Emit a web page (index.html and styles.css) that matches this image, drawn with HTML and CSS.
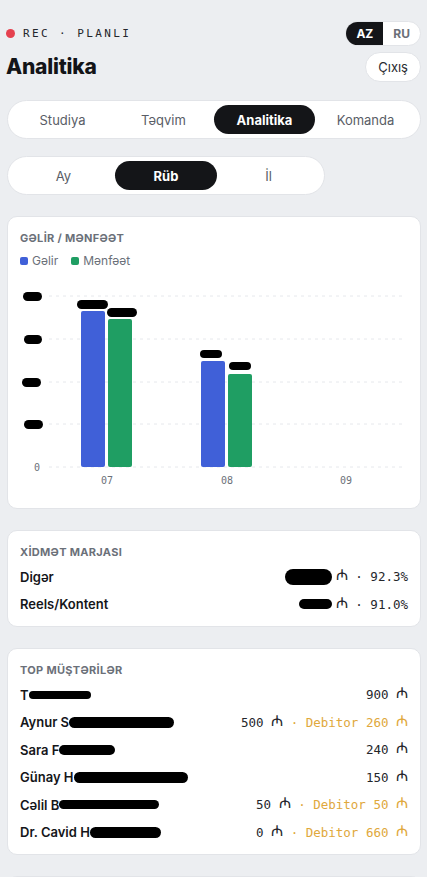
FILE: index.html
```html
<!DOCTYPE html>
<html lang="az">
<head>
  <meta charset="UTF-8" />
  <meta name="viewport" content="width=device-width, initial-scale=1.0"/>
  <title>Analitika</title>
  <link rel="stylesheet" href="styles.css">
</head>
<body>
  <header class="top">
    <div class="top-left">
      <div class="status"><span class="rec-dot"></span>REC · PLANLI</div>
      <h1>Analitika</h1>
    </div>
    <div class="top-right">
      <div class="lang">
        <button class="lang-btn active">AZ</button>
        <button class="lang-btn">RU</button>
      </div>
      <button class="logout">Çıxış</button>
    </div>
  </header>

  <nav class="seg tabs">
    <button class="seg-btn">Studiya</button>
    <button class="seg-btn">Təqvim</button>
    <button class="seg-btn active">Analitika</button>
    <button class="seg-btn">Komanda</button>
  </nav>

  <div class="seg period">
    <button class="seg-btn">Ay</button>
    <button class="seg-btn active">Rüb</button>
    <button class="seg-btn">İl</button>
  </div>

  <section class="card">
    <h2 class="card-title">Gəlir / Mənfəət</h2>
    <div class="legend">
      <span class="legend-item"><i class="sw blue"></i>Gəlir</span>
      <span class="legend-item"><i class="sw green"></i>Mənfəət</span>
    </div>
    <svg class="chart" viewBox="0 0 390 220" width="390" height="220">
      <g class="grid">
        <line x1="29" y1="20" x2="385" y2="20"/>
        <line x1="29" y1="63" x2="385" y2="63"/>
        <line x1="29" y1="106" x2="385" y2="106"/>
        <line x1="29" y1="148" x2="385" y2="148"/>
        <line x1="29" y1="191" x2="385" y2="191"/>
      </g>
      <g class="mask">
        <rect x="3" y="16" width="19" height="9" rx="4.5"/>
        <rect x="4" y="59" width="18" height="9" rx="4.5"/>
        <rect x="2" y="102" width="19" height="9" rx="4.5"/>
        <rect x="4" y="144" width="19" height="9" rx="4.5"/>
      </g>
      <text class="axis" x="20" y="195" text-anchor="end">0</text>
      <rect class="bar-blue" x="61" y="35" width="24" height="156" rx="2"/>
      <rect class="bar-green" x="88" y="43" width="24" height="148" rx="2"/>
      <rect class="bar-blue" x="181" y="85" width="24" height="106" rx="2"/>
      <rect class="bar-green" x="208" y="98" width="24" height="93" rx="2"/>
      <g class="mask">
        <rect x="57" y="24" width="31" height="9" rx="4.5"/>
        <rect x="87" y="32" width="30" height="9" rx="4.5"/>
        <rect x="180" y="74" width="22" height="8" rx="4"/>
        <rect x="209" y="86" width="22" height="8" rx="4"/>
      </g>
      <text class="axis" x="87" y="208" text-anchor="middle">07</text>
      <text class="axis" x="207" y="208" text-anchor="middle">08</text>
      <text class="axis" x="326" y="208" text-anchor="middle">09</text>
    </svg>
  </section>

  <section class="card">
    <h2 class="card-title">Xidmət marjası</h2>
    <div class="row">
      <span class="name">Digər</span>
      <span class="val"><i class="blob m1"></i><span class="cur">₼</span> · 92.3%</span>
    </div>
    <div class="row">
      <span class="name">Reels/Kontent</span>
      <span class="val"><i class="blob m2"></i><span class="cur">₼</span> · 91.0%</span>
    </div>
  </section>

  <section class="card">
    <h2 class="card-title">Top müştərilər</h2>
    <div class="row">
      <span class="name">T<i class="blob c1"></i></span>
      <span class="val">900 <span class="cur">₼</span></span>
    </div>
    <div class="row">
      <span class="name">Aynur S<i class="blob c2"></i></span>
      <span class="val">500 <span class="cur">₼</span><span class="debt"> · Debitor 260 <span class="cur">₼</span></span></span>
    </div>
    <div class="row">
      <span class="name">Sara F<i class="blob c3"></i></span>
      <span class="val">240 <span class="cur">₼</span></span>
    </div>
    <div class="row">
      <span class="name">Günay H<i class="blob c4"></i></span>
      <span class="val">150 <span class="cur">₼</span></span>
    </div>
    <div class="row">
      <span class="name">Cəlil B<i class="blob c5"></i></span>
      <span class="val">50 <span class="cur">₼</span><span class="debt"> · Debitor 50 <span class="cur">₼</span></span></span>
    </div>
    <div class="row">
      <span class="name">Dr. Cavid H<i class="blob c6"></i></span>
      <span class="val">0 <span class="cur">₼</span><span class="debt"> · Debitor 660 <span class="cur">₼</span></span></span>
    </div>
  </section>

  <section class="card card-empty"></section>
</body>
</html>
```

FILE: styles.css
```css
* {
  box-sizing: border-box;
}
body {
  margin: 0;
  padding: 21px 6px 0 7px;
  font-family: Inter, "Noto Sans", sans-serif;
  background-color: #eceef1;
  color: #131418;
}
button {
  font-family: inherit;
  cursor: pointer;
}

/* header */
.top {
  display: flex;
  justify-content: space-between;
  margin-left: -1px;
}
.status {
  display: flex;
  align-items: center;
  height: 25px;
  font-family: "DejaVu Sans Mono", monospace;
  font-size: 11px;
  letter-spacing: 2.4px;
  color: #24262b;
}
.rec-dot {
  width: 9px;
  height: 9px;
  border-radius: 50%;
  background: #e5414f;
  margin: 0 8px 0 0;
}
h1 {
  margin: 6px 0 0;
  height: 30px;
  line-height: 30px;
  font-size: 21px;
  font-weight: 800;
  letter-spacing: -0.2px;
}
.top-right {
  display: flex;
  flex-direction: column;
  align-items: flex-end;
  gap: 6px;
}
.lang {
  display: flex;
  height: 25px;
  border: 1px solid #e2e4e8;
  border-radius: 13px;
  background: #fff;
  overflow: hidden;
}
.lang-btn {
  border: 0;
  background: transparent;
  padding: 0 10px;
  font-size: 12px;
  font-weight: 700;
  color: #6b6f78;
}
.lang-btn.active {
  background: #141518;
  color: #fff;
}
.logout {
  height: 30px;
  padding: 0 12px;
  border: 1px solid #e2e4e8;
  border-radius: 15px;
  background: #fff;
  font-size: 13px;
  color: #2a2c31;
}

/* segmented controls */
.seg {
  display: grid;
  padding: 4px;
  height: 39px;
  border: 1px solid #e2e4e8;
  border-radius: 20px;
  background: #fff;
}
.tabs {
  grid-template-columns: repeat(4, 1fr);
  margin-top: 18px;
}
.period {
  grid-template-columns: repeat(3, 1fr);
  width: 318px;
  margin-top: 17px;
}
.seg-btn {
  border: 0;
  border-radius: 15px;
  background: transparent;
  font-size: 13px;
  color: #595d66;
}
.seg-btn.active {
  background: #141518;
  color: #fff;
  font-weight: 700;
}

/* cards */
.card {
  margin-top: 21px;
  padding: 14px 12px 8px;
  background: #fff;
  border: 1px solid #e2e4e8;
  border-radius: 10px;
}
.card-title {
  margin: 0 0 4px;
  line-height: 14px;
  font-size: 11px;
  font-weight: 700;
  letter-spacing: 0.3px;
  text-transform: uppercase;
  color: #6b7079;
}
.legend {
  display: flex;
  gap: 13px;
  margin-top: 9px;
  line-height: 14px;
  font-size: 12px;
  color: #6b7079;
}
.legend-item {
  display: flex;
  align-items: center;
  gap: 4px;
}
.sw {
  width: 8px;
  height: 8px;
  border-radius: 2px;
}
.sw.blue, .bar-blue {
  background: #4060d8;
  fill: #4060d8;
}
.sw.green, .bar-green {
  background: #1f9e63;
  fill: #1f9e63;
}
.chart {
  display: block;
  margin: 8px 0 4px;
}
.grid line {
  stroke: #e6e8ec;
  stroke-width: 1;
  stroke-dasharray: 3 4;
}
.mask rect {
  fill: #000;
}
.axis {
  font-family: "DejaVu Sans Mono", monospace;
  font-size: 10px;
  fill: #6b7079;
}

.row {
  display: flex;
  justify-content: space-between;
  align-items: center;
  height: 27.5px;
}
.name {
  display: flex;
  align-items: center;
  font-size: 13px;
  font-weight: 600;
  color: #15161a;
}
.val {
  display: flex;
  align-items: center;
  white-space: pre;
  font-family: "DejaVu Sans Mono", monospace;
  font-size: 12.5px;
  color: #24262b;
}
.cur {
  font-family: "DejaVu Sans", sans-serif;
  font-size: 15px;
  line-height: 1;
  margin-top: -2px;
}
.debt {
  display: flex;
  align-items: center;
  color: #e0a83c;
}
.blob {
  display: inline-block;
  background: #000;
  border-radius: 8px;
}
.m1 { width: 47px; height: 16px; margin-right: 4px; }
.m2 { width: 33px; height: 10px; margin-right: 4px; }
.c1 { width: 62px; height: 8px; }
.c2 { width: 105px; height: 11px; }
.c3 { width: 56px; height: 10px; }
.c4 { width: 114px; height: 11px; }
.c5 { width: 100px; height: 9px; }
.c6 { width: 71px; height: 11px; }

.card-empty {
  height: 120px;
}
```
